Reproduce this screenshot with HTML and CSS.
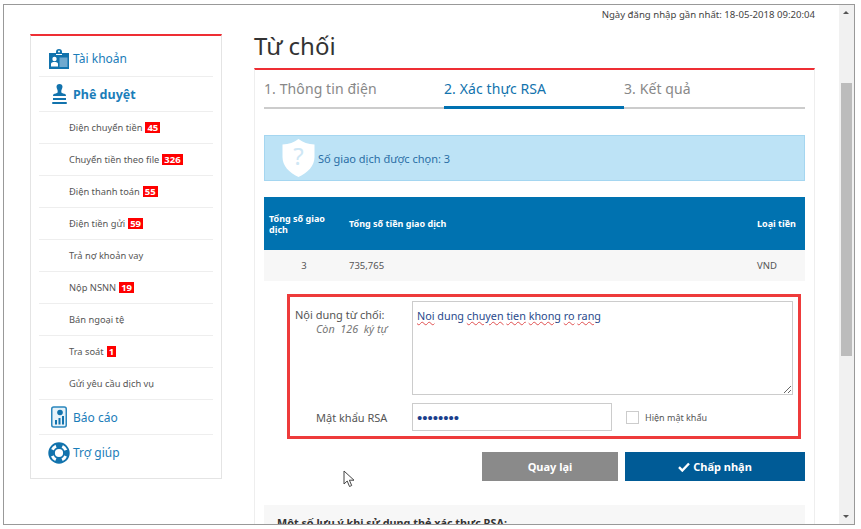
FILE: index.html
```html
<!DOCTYPE html>
<html>
	<head>
		<meta charset="UTF-8">
		<title>Từ chối</title>
		<link rel="stylesheet" href="styles.css">
	</head>
	<body>
		<div class="window">
			<div class="page">
				<div class="lastLogin">Ngày đăng nhập gần nhất: 18-05-2018 09:20:04</div>
				<div class="columns">
					<div class="sideMenu">
						<a class="menuHead" href="#">
							<svg class="menuIcon" width="22" height="22" viewBox="0 0 22 22">
								<path d="M8 4a3 3 0 0 1 6 0h0v2H8z" fill="#1273ad"/>
								<circle cx="11" cy="3.4" r="1" fill="#fff"/>
								<path d="M1 5h7v2h6V5h7v16H1z" fill="#1273ad"/>
								<rect x="11.5" y="9.5" width="8" height="9.5" fill="#6fa9cf"/>
								<circle cx="6.5" cy="11" r="2.2" fill="#fff"/>
								<path d="M3 18.5v-2.5c0-1.500 1.500-2 3.500-2s3.500 .5 3.500 2v2.500z" fill="#fff"/>
							</svg>
							<span>Tài khoản</span>
						</a>
						<a class="menuHead active" href="#">
							<svg class="menuIcon" width="22" height="22" viewBox="0 0 22 22">
								<path d="M11.500 1c2 0 3 1.300 3 2.800 0 2-1.500 3-1.200 5.200.1 1 1.200 1.300 3 1.700 1.300.3 1.700 1 1.700 2.300H5c0-1.300.4-2 1.700-2.300 1.800-.4 2.900-.7 3-1.700.3-2.200-1.200-3.200-1.200-5.200 0-1.500 1-2.800 3-2.800z" fill="#1273ad"/>
								<rect x="5" y="15" width="13" height="2" fill="#1273ad"/>
								<rect x="4" y="19" width="15" height="2" rx="1" fill="#1273ad"/>
							</svg>
							<span>Phê duyệt</span>
						</a>
						<a class="menuItem" href="#">Điện chuyển tiền <b class="badge">45</b></a>
						<a class="menuItem" href="#">Chuyển tiền theo file <b class="badge">326</b></a>
						<a class="menuItem" href="#">Điện thanh toán <b class="badge">55</b></a>
						<a class="menuItem" href="#">Điện tiền gửi <b class="badge">59</b></a>
						<a class="menuItem" href="#">Trả nợ khoản vay</a>
						<a class="menuItem" href="#">Nộp NSNN <b class="badge">19</b></a>
						<a class="menuItem" href="#">Bán ngoại tệ</a>
						<a class="menuItem" href="#">Tra soát <b class="badge">1</b></a>
						<a class="menuItem" href="#">Gửi yêu cầu dịch vụ</a>
						<a class="menuHead" href="#">
							<svg class="menuIcon" width="22" height="22" viewBox="0 0 22 22">
								<rect x="3.750" y="1" width="14.500" height="20" rx="2" fill="#e6f2f9" stroke="#2a86bd" stroke-width="1.500"/>
								<circle cx="12" cy="6.500" r="2.800" fill="#1273ad"/>
								<rect x="7" y="14" width="2" height="4.500" fill="#1273ad"/>
								<rect x="10.500" y="12" width="2" height="6.500" fill="#1273ad"/>
								<rect x="14" y="10" width="2" height="8.500" fill="#1273ad"/>
							</svg>
							<span>Báo cáo</span>
						</a>
						<a class="menuHead" href="#">
							<svg class="menuIcon" width="22" height="22" viewBox="0 0 22 22">
								<circle cx="11" cy="11" r="9.800" fill="none" stroke="#1273ad" stroke-width="1.800"/>
								<circle cx="11" cy="11" r="5" fill="none" stroke="#1273ad" stroke-width="1.800"/>
								<circle cx="11" cy="11" r="7.500" fill="none" stroke="#1273ad" stroke-width="5" stroke-dasharray="6.500 5.280" stroke-dashoffset="3.250"/>
							</svg>
							<span>Trợ giúp</span>
						</a>
					</div>
					<div class="content">
						<h1 class="pageTitle">Từ chối</h1>
						<div class="panel">
							<div class="steps">
								<span class="step">1. Thông tin điện</span>
								<span class="step current">2. Xác thực RSA</span>
								<span class="step">3. Kết quả</span>
							</div>
							<div class="notice">
								<svg class="shield" width="33" height="38" viewBox="0 0 33 38">
									<path d="M16.500 0C21 3.500 26 5 32.500 5.500V18C32.500 27 26 33.500 16.500 38 7 33.500.5 27 .5 18V5.500C7 5 12 3.500 16.500 0z" fill="#fff"/>
									<text x="16.500" y="26" text-anchor="middle" class="shieldMark">?</text>
								</svg>
								<span>Số giao dịch được chọn: 3</span>
							</div>
							<table class="summary">
								<tr>
									<th class="colCount">Tổng số giao dịch</th>
									<th>Tổng số tiền giao dịch</th>
									<th class="colCurrency">Loại tiền</th>
								</tr>
								<tr>
									<td class="center">3</td>
									<td>735,765</td>
									<td>VND</td>
								</tr>
							</table>
							<div class="formBox">
								<div class="formRow">
									<div class="formLabel">
										<div>Nội dung từ chối:</div>
										<em class="charsLeft">Còn&nbsp; 126&nbsp; ký tự</em>
									</div>
									<div class="reason"><u>Noi</u> dung <u>chuyen</u> <u>tien</u> <u>khong</u> <u>ro</u> <u>rang</u></div>
								</div>
								<div class="formRow passRow">
									<div class="formLabel passLabel">Mật khẩu RSA</div>
									<input class="password" type="password" value="12345678">
									<label class="showPass"><input type="checkbox"> Hiện mật khẩu</label>
								</div>
							</div>
							<div class="actions">
								<a class="btn btnBack" href="#">Quay lại</a>
								<a class="btn btnOk" href="#">
									<svg width="12" height="10" viewBox="0 0 12 10"><path d="M1 5.200 4.300 8.500 11 1.500" fill="none" stroke="#fff" stroke-width="2.400"/></svg>
									Chấp nhận
								</a>
							</div>
							<div class="notes">Một số lưu ý khi sử dụng thẻ xác thực RSA:</div>
						</div>
					</div>
				</div>
				<svg class="cursor" width="13" height="18" viewBox="0 0 13 18">
					<path d="M1 1v13l3.200-3 2.300 5.500 2.200-1-2.300-5.300H11z" fill="#fff" stroke="#444" stroke-width="1"/>
				</svg>
			</div>
			<div class="scrollbar">
				<span class="arrowUp"></span>
				<span class="thumb"></span>
				<span class="arrowDown"></span>
			</div>
		</div>
	</body>
</html>
```

FILE: styles.css
```css
*{
	box-sizing: border-box;
}
body{
	margin: 0;
	background-color: #fff;
	font-family: "Noto Sans","DejaVu Sans",sans-serif;
	font-size: 9.5px;
	color: #444;
}
a{
	text-decoration: none;
}
.window{
	display: flex;
	width: 852px;
	height: 521px;
	margin: 4px 0 0 3px;
	border: 1px solid #999;
	overflow: hidden;
}
.page{
	position: relative;
	flex: 1;
	overflow: hidden;
}
.lastLogin{
	width: 811px;
	height: 20px;
	padding-top: 3px;
	text-align: right;
	font-size: 9.600px;
	color: #444;
}
.columns{
	display: flex;
	align-items: flex-start;
}

/* left menu */
.sideMenu{
	width: 192px;
	margin: 9px 0 0 26px;
	padding: 0 8px 8px;
	border: 1px solid #e4e4e4;
	border-top: 2px solid #ee2e34;
}
.menuHead{
	display: flex;
	align-items: center;
	gap: 3px;
	height: 35px;
	padding-left: 9px;
	border-bottom: 1px solid #eee;
	font-size: 12px;
	color: #1a7db9;
}
.menuHead:first-child{
	height: 41px;
	padding-top: 5px;
}
.menuHead:last-child{
	border-bottom: none;
}
.menuHead.active{
	font-size: 12.500px;
	font-weight: bold;
}
.menuItem{
	display: flex;
	align-items: center;
	gap: 3px;
	height: 32px;
	padding-left: 30px;
	border-bottom: 1px solid #eee;
	font-size: 9.300px;
	color: #555;
}
.badge{
	padding: 0 2px;
	background-color: #f00;
	color: #fff;
	font-size: 9.500px;
	line-height: 11px;
}

/* main part */
.content{
	width: 561px;
	margin-left: 32px;
}
.pageTitle{
	height: 43px;
	margin: 0;
	font-size: 24px;
	line-height: 42px;
	font-weight: normal;
	color: #333;
}
.panel{
	height: 460px;
	padding: 0 9px;
	border-top: 2px solid #ee2e34;
	border-left: 1px solid #eee;
	border-right: 1px solid #eee;
}
.steps{
	display: flex;
	height: 39px;
	border-bottom: 2px solid #ccc;
}
.step{
	width: 180px;
	padding-top: 9px;
	font-size: 14px;
	letter-spacing: .1px;
	color: #888;
}
.step.current{
	height: 39px;
	border-bottom: 3px solid #0071b1;
	color: #1273ad;
}
.notice{
	display: flex;
	align-items: center;
	gap: 3px;
	height: 46px;
	margin-top: 26px;
	padding-left: 17px;
	border: 1px solid #a5d6f0;
	background-color: #bde3f6;
	font-size: 11px;
	color: #2a6ea5;
}
.shieldMark{
	font-size: 24px;
	fill: #cfe7f5;
}
.summary{
	width: 541px;
	margin-top: 16px;
	border-collapse: collapse;
	table-layout: fixed;
}
.summary th{
	height: 53px;
	padding: 0 5px;
	background-color: #0072b0;
	color: #fff;
	font-size: 9px;
	text-align: left;
	line-height: 11px;
}
.summary td{
	height: 31px;
	padding: 0 5px;
	background-color: #f7f7f7;
	color: #555;
}
.summary .colCount{
	width: 80px;
}
.summary .colCurrency{
	width: 53px;
	white-space: nowrap;
}
.summary .center{
	text-align: center;
}
.formBox{
	width: 514px;
	height: 145px;
	margin: 13px 0 0 23px;
	padding: 4px 5px;
	border: 3px solid #ee3b3b;
}
.formRow{
	display: flex;
	align-items: flex-start;
}
.formLabel{
	width: 117px;
	padding: 6px 0 0;
	font-size: 11px;
	line-height: 15px;
	color: #555;
}
.charsLeft{
	display: block;
	margin-top: 1px;
	padding-left: 21px;
	font-size: 10.800px;
	line-height: 12px;
	color: #777;
}
.reason{
	width: 381px;
	height: 94px;
	padding: 6px 4px;
	border: 1px solid #ccc;
	overflow: auto;
	resize: both;
	font-size: 10.800px;
	color: #2a4a8c;
}
.reason u{
	text-decoration: underline wavy #e05050;
	text-decoration-thickness: 1px;
}
.passRow{
	align-items: center;
	margin-top: 8px;
}
.passLabel{
	padding: 0 0 0 21px;
}
.password{
	width: 200px;
	height: 28px;
	padding: 0 4px;
	border: 1px solid #ccc;
	color: #1a3f8c;
	font-size: 15px;
	letter-spacing: 0;
}
.showPass{
	display: flex;
	align-items: center;
	gap: 6px;
	margin-left: 14px;
	font-size: 9px;
	color: #555;
}
.showPass input{
	appearance: none;
	width: 13px;
	height: 13px;
	margin: 0;
	border: 1px solid #ccc;
	background-color: #fff;
}
.actions{
	display: flex;
	justify-content: flex-end;
	gap: 7px;
	margin-top: 13px;
}
.btn{
	display: flex;
	align-items: center;
	justify-content: center;
	gap: 3px;
	height: 29px;
	font-size: 11px;
	font-weight: bold;
	color: #fff;
}
.btnBack{
	width: 136px;
	background-color: #8a8a8a;
}
.btnOk{
	width: 180px;
	background-color: #005b96;
}
.notes{
	height: 60px;
	margin-top: 24px;
	padding: 10px 13px;
	background-color: #f7f7f7;
	font-size: 10.800px;
	font-weight: bold;
	color: #333;
}

.cursor{
	position: absolute;
	left: 339px;
	top: 465px;
}

/* scrollbar drawn by hand, same as the browser's */
.scrollbar{
	position: relative;
	flex: none;
	width: 15px;
	background-color: #f1f1f1;
}
.thumb{
	position: absolute;
	left: 2px;
	top: 78px;
	width: 11px;
	height: 273px;
	background-color: #bcbcbc;
}
.arrowUp,.arrowDown{
	position: absolute;
	left: 4px;
	width: 0;
	height: 0;
	border-left: 3px solid transparent;
	border-right: 3px solid transparent;
}
.arrowUp{
	top: 6px;
	border-bottom: 3px solid #555;
}
.arrowDown{
	bottom: 6px;
	border-top: 3px solid #555;
}
```
